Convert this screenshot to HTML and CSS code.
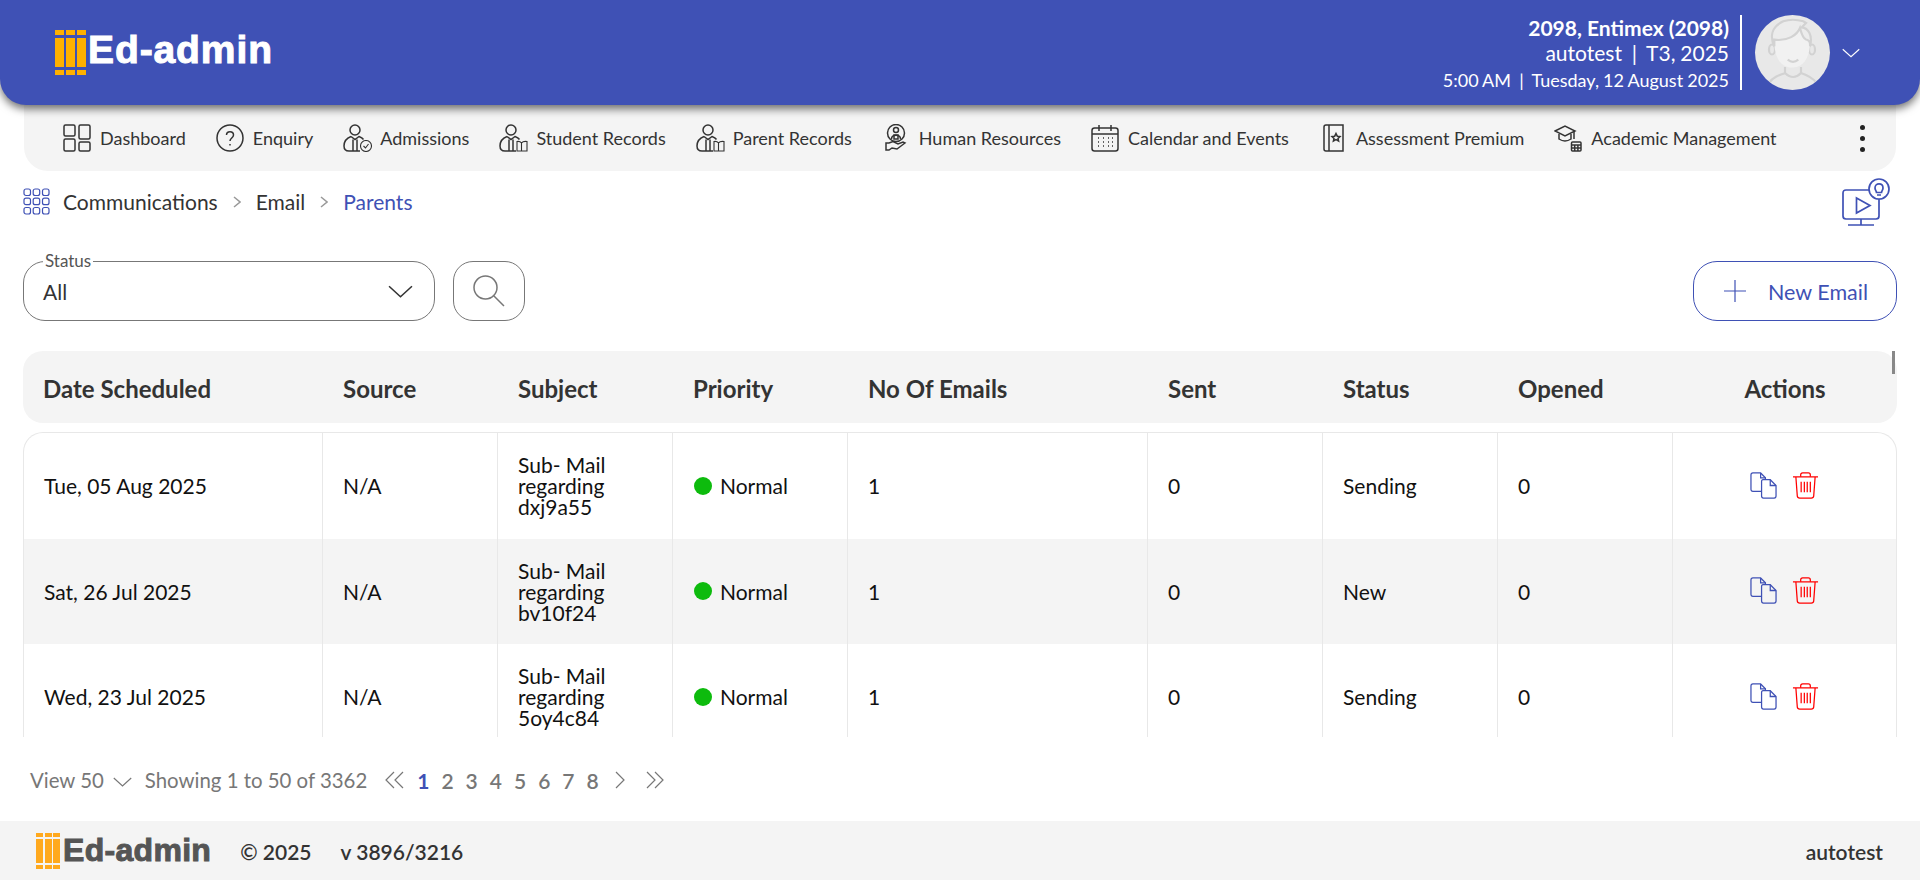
FILE: index.html
```html
<!DOCTYPE html>
<html lang="en">
<head>
  <meta charset="UTF-8" />
  <title>Ed-admin - Email Parents</title>
  <link rel="stylesheet" href="styles.css">
</head>
<body>
  <svg class="defs" width="0" height="0">
    <symbol id="ic-staff" viewBox="0 0 28 28">
      <circle cx="12" cy="6" r="5" />
      <path d="M8 12.500 C4 14 1 17 1 22 C1 25.500 3 27 6 27 H17" />
      <path d="M8 12.500 L12 15.500 L16 12.500 C18 13.200 19.500 14 20.500 15.500" />
      <path d="M10 15.500 V27 M14 15.500 V27" />
    </symbol>
    <symbol id="ic-copy" viewBox="0 0 28 28">
      <path d="M12 20 H3 Q1 20 1 18 V3 Q1 1 3 1 H11 L16 6 V8" />
      <path d="M11 1 V6 H16" />
      <path d="M13.500 8 H21 L27 14 V25 Q27 27 25 27 H14 Q12 27 12 25 V9.500 Q12 8 13.500 8 Z" />
      <path d="M21 8 V14 H27" />
    </symbol>
    <symbol id="ic-trash" viewBox="0 0 28 28">
      <path d="M1 5 H27 M4 5 L5.500 25 Q5.700 27 8 27 H20 Q22.300 27 22.500 25 L24 5" />
      <path d="M9 5 V3 Q9 1 11 1 H17 Q19 1 19 3 V5" />
      <path d="M9.500 10 V21 M12.800 10 V21 M15.800 10 V21 M19 10 V21" />
    </symbol>
    <symbol id="ic-chev" viewBox="0 0 24 12">
      <path d="M1 1 L12 11 L23 1" />
    </symbol>
  </svg>

  <header class="topbar">
    <div class="logo">
      <span class="logo-mark"><i></i><i></i><i></i></span>
      <span class="logo-text">Ed-admin</span>
    </div>
    <div class="user-info">
      <div class="school">2098, Entimex (2098)</div>
      <div class="term">autotest &nbsp;|&nbsp; T3, 2025</div>
      <div class="clock">5:00 AM &nbsp;|&nbsp; Tuesday, 12 August 2025</div>
    </div>
    <div class="avatar">
      <svg viewBox="0 0 75 75">
        <ellipse cx="17" cy="34.500" rx="3" ry="5" />
        <ellipse cx="57" cy="34.500" rx="3" ry="5" />
        <path class="face" d="M19.300 24.700 C19 40 24 52.500 37.500 52.500 C50 52.500 55.500 40 55 24.700 L45 13 L30 14 Z" />
        <path class="hair" d="M19.300 31.300 C15 22 16 12 28.300 6.300 C35 4 42 4.500 48.300 6.300 L51 8 L46.700 12.300 C53 13 58 20 55 31.300 C55.500 27 54 25 51 24.500 C48 23.500 46.500 19 45 13 C42 20 33 26.500 19.300 24.700 Z" />
        <path d="M32.700 44.700 Q38 49 43.300 44.700" />
        <path d="M30 52 V58 Q38.300 66 46 58 V52" />
        <path d="M14 68 C18 62 24 60 30.700 58 M46 58 C52 60 57 62 61.700 68" />
      </svg>
    </div>
    <svg class="chev chev-user"><use href="#ic-chev" /></svg>
  </header>

  <nav class="menu">
    <a class="menu-item">
      <svg class="menu-icon" viewBox="0 0 28 28"><rect x="1" y="1" width="11" height="11" rx="1.500"/><rect x="16" y="1" width="11" height="14" rx="1.500"/><rect x="1" y="15" width="11" height="12" rx="1.500"/><rect x="16" y="18" width="11" height="9" rx="1.500"/></svg>
      Dashboard
    </a>
    <a class="menu-item">
      <svg class="menu-icon" viewBox="0 0 28 28"><circle cx="14" cy="14" r="13"/><path d="M10.500 11 C10.500 6.500 17.500 6.500 17.500 11 C17.500 14 14 14 14 17"/><path d="M14 20 V21.500"/></svg>
      Enquiry
    </a>
    <a class="menu-item">
      <svg class="menu-icon"><use href="#ic-staff"/></svg>
      <svg class="menu-badge" viewBox="0 0 12 12"><circle cx="6" cy="6" r="5.500"/><path d="M3.500 6 L5.500 8 L8.500 4"/></svg>
      Admissions
    </a>
    <a class="menu-item">
      <svg class="menu-icon"><use href="#ic-staff"/></svg>
      <svg class="menu-badge" viewBox="0 0 12 12"><path d="M1 1.500 Q4 1 5.500 3 Q7 1 11 1.500 V11 H1 Z M5.500 3 V11"/></svg>
      Student Records
    </a>
    <a class="menu-item">
      <svg class="menu-icon"><use href="#ic-staff"/></svg>
      <svg class="menu-badge" viewBox="0 0 12 12"><path d="M1 1.500 Q4 1 5.500 3 Q7 1 11 1.500 V11 H1 Z M5.500 3 V11"/></svg>
      Parent Records
    </a>
    <a class="menu-item">
      <svg class="menu-icon" viewBox="0 0 28 28"><circle cx="14" cy="9" r="8.500"/><circle cx="14" cy="6" r="2.500"/><path d="M9.500 15 C9.500 10 18.500 10 18.500 15"/><path d="M12 11 H16 V15 H12 Z"/><path d="M4 19 H7 L11 17.500 L16 20 L21 18 L23 19 L15 25 L10 24 L7 26 H4 Z"/></svg>
      Human Resources
    </a>
    <a class="menu-item">
      <svg class="menu-icon" viewBox="0 0 28 28"><rect x="1" y="4" width="26" height="23" rx="2.500"/><path d="M1 10 H27 M8 1 V7 M20 1 V7"/><path d="M7 14 H8 M12 14 H13 M17 14 H18 M21 14 H22 M7 18 H8 M12 18 H13 M17 18 H18 M21 18 H22 M7 22 H8 M12 22 H13 M17 22 H18 M21 22 H22"/></svg>
      Calendar and Events
    </a>
    <a class="menu-item">
      <svg class="menu-icon" viewBox="0 0 28 28"><path d="M7 1 H24 V27 H7 Q5 27 5 25 V3 Q5 1 7 1 Z M10 1 V27"/><path d="M17 9.500 L18.300 12.200 L21 12.500 L19 14.400 L19.600 17 L17 15.700 L14.400 17 L15 14.400 L13 12.500 L15.700 12.200 Z"/></svg>
      Assessment Premium
    </a>
    <a class="menu-item">
      <svg class="menu-icon" viewBox="0 0 28 28"><path d="M1 7 L11 2 L21 7 L11 12 Z"/><path d="M5 10 V15 Q11 19 17 15 V10"/><path d="M20 7 V15"/><rect x="17.500" y="18" width="9.500" height="9" rx="1"/><path d="M17.500 21 H27 M17.500 24 H27 M20.700 21 V27 M23.900 21 V27"/></svg>
      Academic Management
    </a>
    <span class="menu-more"><i></i><i></i><i></i></span>
  </nav>

  <main class="page">
    <div class="crumbs">
      <svg class="crumb-icon" viewBox="0 0 27 27">
        <rect x="1" y="1" width="6.500" height="6.500" rx="2"/><rect x="10.200" y="1" width="6.500" height="6.500" rx="2"/><rect x="19.500" y="1" width="6.500" height="6.500" rx="2"/>
        <rect x="1" y="10.200" width="6.500" height="6.500" rx="2"/><rect x="10.200" y="10.200" width="6.500" height="6.500" rx="2"/><rect x="19.500" y="10.200" width="6.500" height="6.500" rx="2"/>
        <rect x="1" y="19.500" width="6.500" height="6.500" rx="2"/><rect x="10.200" y="19.500" width="6.500" height="6.500" rx="2"/><rect x="19.500" y="19.500" width="6.500" height="6.500" rx="2"/>
      </svg>
      <span>Communications</span>
      <svg class="crumb-sep" viewBox="0 0 8 12"><path d="M1 1 L7 6 L1 11"/></svg>
      <span>Email</span>
      <svg class="crumb-sep" viewBox="0 0 8 12"><path d="M1 1 L7 6 L1 11"/></svg>
      <span class="crumb-now">Parents</span>
      <svg class="help-video" viewBox="0 0 48 48">
        <path d="M27 12 H4 Q1 12 1 15 V38 Q1 41 4 41 H34 Q37 41 37 38 V21"/>
        <path d="M14.500 20 L28 27.500 L14.500 35 Z"/>
        <path d="M19 41 V47 M6 47 H32"/>
        <circle class="fill-white" cx="37" cy="11" r="10"/>
        <path d="M33 10 C33 4.500 41 4.500 41 10 C41 12 39.500 13 39.500 14.500 H34.500 C34.500 13 33 12 33 10 Z M35 17 H39"/>
      </svg>
    </div>

    <div class="filters">
      <fieldset class="status-box">
        <legend>Status</legend>
        <span>All</span>
        <svg class="chev chev-status"><use href="#ic-chev"/></svg>
      </fieldset>
      <button class="search-btn">
        <svg viewBox="0 0 32 32"><circle cx="12.500" cy="12.500" r="11.500"/><path d="M21 21 L31 31"/></svg>
      </button>
      <button class="new-btn">
        <svg viewBox="0 0 22 22"><path d="M11 0 V22 M0 11 H22"/></svg>
        New Email
      </button>
    </div>

    <div class="grid-head">
      <div>Date Scheduled</div><div>Source</div><div>Subject</div><div>Priority</div><div>No Of Emails</div><div>Sent</div><div>Status</div><div>Opened</div><div class="center">Actions</div>
      <span class="scroll-thumb"></span>
    </div>

    <div class="grid-body">
      <div class="grid-row">
        <div>Tue, 05 Aug 2025</div><div>N/A</div><div class="subject">Sub- Mail regarding dxj9a55</div>
        <div><span class="dot"></span>Normal</div><div>1</div><div>0</div><div>Sending</div><div>0</div>
        <div class="actions"><svg class="ic-copy"><use href="#ic-copy"/></svg><svg class="ic-trash"><use href="#ic-trash"/></svg></div>
      </div>
      <div class="grid-row">
        <div>Sat, 26 Jul 2025</div><div>N/A</div><div class="subject">Sub- Mail regarding bv10f24</div>
        <div><span class="dot"></span>Normal</div><div>1</div><div>0</div><div>New</div><div>0</div>
        <div class="actions"><svg class="ic-copy"><use href="#ic-copy"/></svg><svg class="ic-trash"><use href="#ic-trash"/></svg></div>
      </div>
      <div class="grid-row">
        <div>Wed, 23 Jul 2025</div><div>N/A</div><div class="subject">Sub- Mail regarding 5oy4c84</div>
        <div><span class="dot"></span>Normal</div><div>1</div><div>0</div><div>Sending</div><div>0</div>
        <div class="actions"><svg class="ic-copy"><use href="#ic-copy"/></svg><svg class="ic-trash"><use href="#ic-trash"/></svg></div>
      </div>
    </div>

    <div class="pager">
      <span>View 50</span>
      <svg class="chev chev-view"><use href="#ic-chev"/></svg>
      <span class="showing">Showing 1 to 50 of 3362</span>
      <svg class="pg-arrow wide first" viewBox="0 0 20 18"><path d="M10 1 L2 9 L10 17 M19 1 L11 9 L19 17"/></svg>
      <b class="pg-num active">1</b><b class="pg-num">2</b><b class="pg-num">3</b><b class="pg-num">4</b><b class="pg-num">5</b><b class="pg-num">6</b><b class="pg-num">7</b><b class="pg-num">8</b>
      <svg class="pg-arrow next" viewBox="0 0 10 18"><path d="M1 1 L9 9 L1 17"/></svg>
      <svg class="pg-arrow wide last" viewBox="0 0 20 18"><path d="M2 1 L10 9 L2 17 M10 1 L18 9 L10 17"/></svg>
    </div>
  </main>

  <footer class="foot">
    <div class="logo logo-small">
      <span class="logo-mark"><i></i><i></i><i></i></span>
      <span class="logo-text">Ed-admin</span>
    </div>
    <span class="copy">© 2025</span>
    <span class="ver">v 3896/3216</span>
    <span class="foot-user">autotest</span>
  </footer>
</body>
</html>
```

FILE: styles.css
```css
* {
  box-sizing: border-box;
}
html, body {
  margin: 0;
  height: 880px;
  overflow: hidden;
}
body {
  font-family: "Lato", sans-serif;
  background: white;
  color: #333;
  display: flex;
  flex-direction: column;
}
.defs {
  position: absolute;
}
svg {
  fill: none;
  stroke: currentColor;
  stroke-width: 1.5;
  display: block;
  flex: none;
}
.chev {
  width: 24px;
  height: 12px;
}

/* Top bar */
.topbar {
  height: 105px;
  background: #3f51b5;
  border-radius: 0 0 26px 26px;
  box-shadow: 0 4px 8px rgba(0,0,0,0.55);
  display: flex;
  align-items: center;
  padding: 0 60px 0 55px;
  color: white;
  position: relative;
  z-index: 2;
}
.logo {
  display: flex;
  align-items: center;
  gap: 2px;
}
.logo-mark {
  display: flex;
  gap: 2px;
}
.logo-mark i {
  width: 9px;
  height: 45px;
  background: linear-gradient(#ffb000 5px, transparent 5px, transparent 8px, #ffb000 8px, #ffb000 37px, transparent 37px, transparent 40px, #ffb000 40px);
}
.logo-text {
  font-family: "Liberation Sans", sans-serif;
  font-weight: bold;
  font-size: 39px;
  letter-spacing: 0.9px;
  -webkit-text-stroke: 1px currentColor;
  margin-top: -5px;
}
.user-info {
  margin-left: auto;
  text-align: right;
  padding-right: 11px;
  border-right: 2px solid white;
  height: 75px;
  width: 400px;
  margin-right: 13px;
  font-size: 21px;
  line-height: 25px;
}
.school {
  font-weight: bold;
}
.term, .clock {
  word-spacing: -0.5px;
}
.clock {
  font-size: 18px;
  line-height: 31px;
}
.avatar {
  width: 75px;
  height: 75px;
  border-radius: 50%;
  background: #e8e8e8;
  overflow: hidden;
  color: #d2d2d2;
}
.avatar svg {
  stroke-width: 2.2;
}
.avatar .face {
  fill: #f1f1f1;
  stroke: none;
}
.avatar .hair {
  fill: #ececec;
}
.chev-user {
  width: 18px;
  height: 10px;
  margin-left: 12px;
}

/* Menu */
.menu {
  margin: 0 24px;
  height: 66px;
  background: #f4f4f4;
  border-radius: 0 0 24px 24px;
  display: flex;
  align-items: center;
  padding: 0 31px 0 39px;
  font-size: 18px;
  color: #333;
}
.menu-item {
  display: flex;
  align-items: center;
  gap: 9px;
  margin-right: 30px;
  position: relative;
  white-space: nowrap;
}
.menu-icon {
  width: 28px;
  height: 28px;
}
.menu-badge {
  position: absolute;
  left: 17px;
  bottom: 0;
  width: 12px;
  height: 12px;
  background: #f4f4f4;
  stroke-width: 1.1;
}
.menu-more {
  margin-left: auto;
  display: flex;
  flex-direction: column;
  gap: 6px;
}
.menu-more i {
  width: 5px;
  height: 5px;
  border-radius: 50%;
  background: #222;
}

/* Page */
.page {
  flex: 1;
  padding: 0 23px;
  min-height: 0;
}
.crumbs {
  height: 54px;
  padding-top: 7px;
  display: flex;
  align-items: center;
  font-size: 21px;
  color: #333;
  gap: 15px;
}
.crumb-icon {
  width: 27px;
  height: 27px;
  color: #3f51b5;
  margin-right: -2px;
  stroke-width: 1.2;
}
.crumb-sep {
  width: 8px;
  height: 12px;
  color: #999;
}
.crumb-now {
  color: #3f51b5;
}
.help-video {
  margin-left: auto;
  margin-right: 7px;
  width: 48px;
  height: 48px;
  color: #3f51b5;
  stroke-width: 1.7;
}
.help-video .fill-white {
  fill: white;
}

.filters {
  display: flex;
  align-items: flex-end;
  height: 96px;
  gap: 18px;
}
.status-box {
  width: 412px;
  height: 68px;
  margin: 0;
  padding: 0 20px 0 19px;
  border: 1px solid #777;
  border-radius: 22px;
  display: flex;
  align-items: center;
  justify-content: space-between;
  font-size: 21px;
  color: #333;
}
.status-box legend {
  font-size: 17px;
  color: #555;
  padding: 0 2px;
  margin-left: 0;
  line-height: 16px;
}
.status-box span {
  margin-top: -7px;
}
.chev-status {
  width: 25px;
  height: 13px;
  margin-right: 1px;
  margin-top: -7px;
}
.search-btn {
  width: 72px;
  height: 60px;
  background: white;
  border: 1px solid #777;
  border-radius: 20px;
  display: flex;
  align-items: center;
  justify-content: center;
  color: #777;
  padding: 0;
}
.search-btn svg {
  width: 32px;
  height: 32px;
}
.new-btn {
  margin-left: auto;
  width: 204px;
  height: 60px;
  background: white;
  border: 1px solid #3f51b5;
  border-radius: 24px;
  display: flex;
  align-items: center;
  gap: 22px;
  padding: 2px 0 0 30px;
  font-family: inherit;
  font-size: 21.500px;
  color: #3f51b5;
}
.new-btn svg {
  width: 22px;
  height: 22px;
  stroke-width: 1.2;
  margin-top: -2px;
}

/* Table */
.grid-head, .grid-row {
  display: grid;
  grid-template-columns: 300px 175px 175px 175px 300px 175px 175px 175px 1fr;
}
.grid-head {
  margin-top: 30px;
  height: 72px;
  padding-top: 2px;
  background: #f4f4f4;
  border-radius: 20px;
  align-items: center;
  font-size: 24px;
  font-weight: bold;
  color: #333;
  position: relative;
}
.grid-head > div {
  padding-left: 20px;
}
.grid-head .center {
  padding-left: 0;
  text-align: center;
}
.scroll-thumb {
  position: absolute;
  top: 0;
  right: 2px;
  width: 3px;
  height: 23px;
  background: #888;
}
.grid-body {
  margin-top: 9px;
  height: 305px;
  overflow: hidden;
  border: 1px solid #e8e8e8;
  border-bottom: 0;
  border-radius: 20px 20px 0 0;
  font-size: 21px;
  color: #111;
}
.grid-row {
  height: 105.500px;
  align-items: stretch;
  margin-left: -1px;
}
.grid-row:nth-child(even) {
  background: #f4f4f4;
}
.grid-row > div {
  display: flex;
  align-items: center;
  padding-left: 20px;
  border-right: 1px solid #e8e8e8;
}
.grid-row > div:first-child {
  padding-left: 21px;
}
.grid-row > div:last-child {
  border-right: 0;
}
.subject {
  line-height: 21px;
  padding-right: 30px;
}
.dot {
  width: 18px;
  height: 18px;
  border-radius: 50%;
  background: #0dbb0d;
  margin: 0 8px 0 1px;
}
.grid-row > .actions {
  justify-content: center;
  gap: 15px;
  padding: 0 1px 0 0;
}
.ic-copy, .ic-trash {
  width: 27px;
  height: 27px;
  margin-top: -1px;
  stroke-width: 1.3;
}
.ic-copy {
  color: #3f51b5;
}
.ic-trash {
  color: #f00;
}

.pager {
  height: 84px;
  padding: 2px 0 0 7px;
  display: flex;
  align-items: center;
  font-size: 20.400px;
  color: #777;
}
.chev-view {
  width: 19px;
  height: 10px;
  margin: 4px 0 0 9px;
}
.showing {
  margin-left: 13px;
}
.pg-arrow {
  width: 10px;
  height: 18px;
  color: #777;
  stroke-width: 1.2;
}
.pg-arrow.wide {
  width: 20px;
}
.pg-arrow.first {
  margin-left: 17px;
}
.pg-arrow.next {
  margin-left: 10px;
}
.pg-arrow.last {
  margin-left: 20px;
}
.pg-num {
  width: 24.200px;
  text-align: center;
  font-weight: 600;
  font-size: 21px;
}
.pg-arrow + .pg-num {
  margin-left: 7px;
}
.pg-num.active {
  color: #3f51b5;
  font-weight: bold;
}

/* Footer */
.foot {
  height: 59px;
  background: #f4f4f4;
  display: flex;
  align-items: center;
  padding: 2px 37px 0 36px;
  font-size: 21px;
  font-weight: 600;
  color: #333;
}
.logo-small {
  gap: 3px;
  color: #555;
}
.logo-small .logo-mark {
  gap: 1.500px;
  margin-top: -2px;
}
.logo-small .logo-mark i {
  width: 7px;
  height: 36px;
  background: linear-gradient(#ffa91e 4px, transparent 4px, transparent 6px, #ffa91e 6px, #ffa91e 30px, transparent 30px, transparent 32px, #ffa91e 32px);
}
.logo-small .logo-text {
  font-size: 32px;
  letter-spacing: 0.3px;
  margin-top: -3px;
}
.copy {
  margin-left: 29px;
}
.ver {
  margin-left: 29px;
}
.foot-user {
  margin-left: auto;
}
```
